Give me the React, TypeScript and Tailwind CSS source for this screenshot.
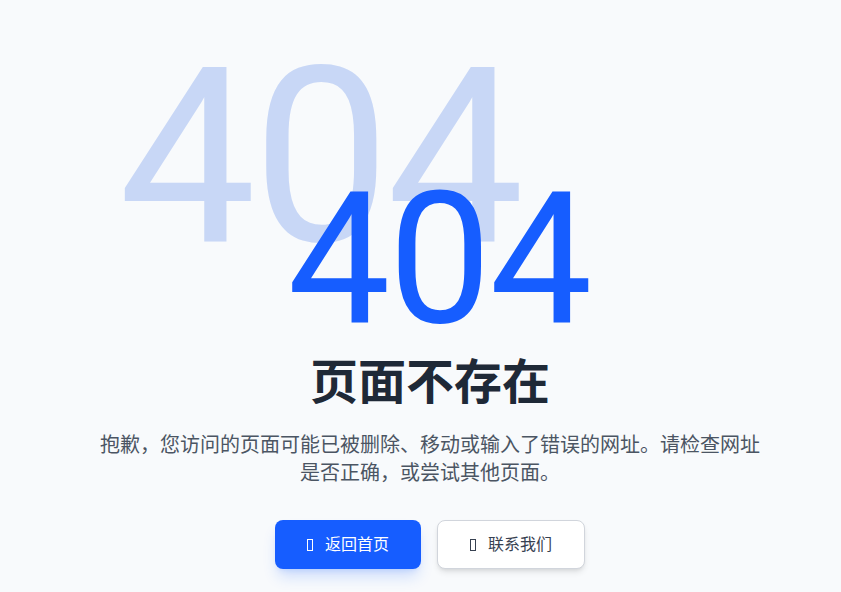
import React from 'react';

const font = { fontFamily: 'Roboto, "Noto Sans CJK SC", sans-serif' };

// 图标字体缺失时浏览器画出的方框
const MissingGlyph: React.FC<{ className?: string }> = ({ className }) => (
  <span className={`inline-block w-[6px] h-[12px] border ${className ?? ''}`} />
);

const App: React.FC = () => {
  return (
    <div style={font} className="min-h-screen bg-[#f8fafc] flex flex-col items-center pt-[168px] pl-[19px] overflow-hidden">
      <div className="relative ml-[18px]">
        {/* 背景大号 404 */}
        <div className="absolute left-[-169px] top-[-133px] text-[245px] leading-none tracking-[-0.015em] text-[#c8d7f6] select-none">
          404
        </div>
        <h1 className="relative text-[183px] leading-none tracking-[-0.01em] text-[#165dff]">404</h1>
      </div>

      <h2 className="mt-2 text-5xl leading-none font-bold text-[#1f2937]">页面不存在</h2>

      <p className="mt-6 max-w-2xl text-center text-xl text-[#4b5563]">
        抱歉，您访问的页面可能已被删除、移动或输入了错误的网址。请检查网址是否正确，或尝试其他页面。
      </p>

      <div className="mt-[33px] flex gap-4">
        <button className="flex items-center h-[49px] px-8 rounded-lg bg-[#165dff] text-white text-base shadow-lg shadow-[#165dff]/20">
          <MissingGlyph className="border-white mr-3" />
          返回首页
        </button>
        <button className="flex items-center h-[49px] px-8 rounded-lg bg-white border border-gray-300 text-[#374151] text-base shadow-md">
          <MissingGlyph className="border-[#374151] mr-3" />
          联系我们
        </button>
      </div>
    </div>
  );
};

export default App;
